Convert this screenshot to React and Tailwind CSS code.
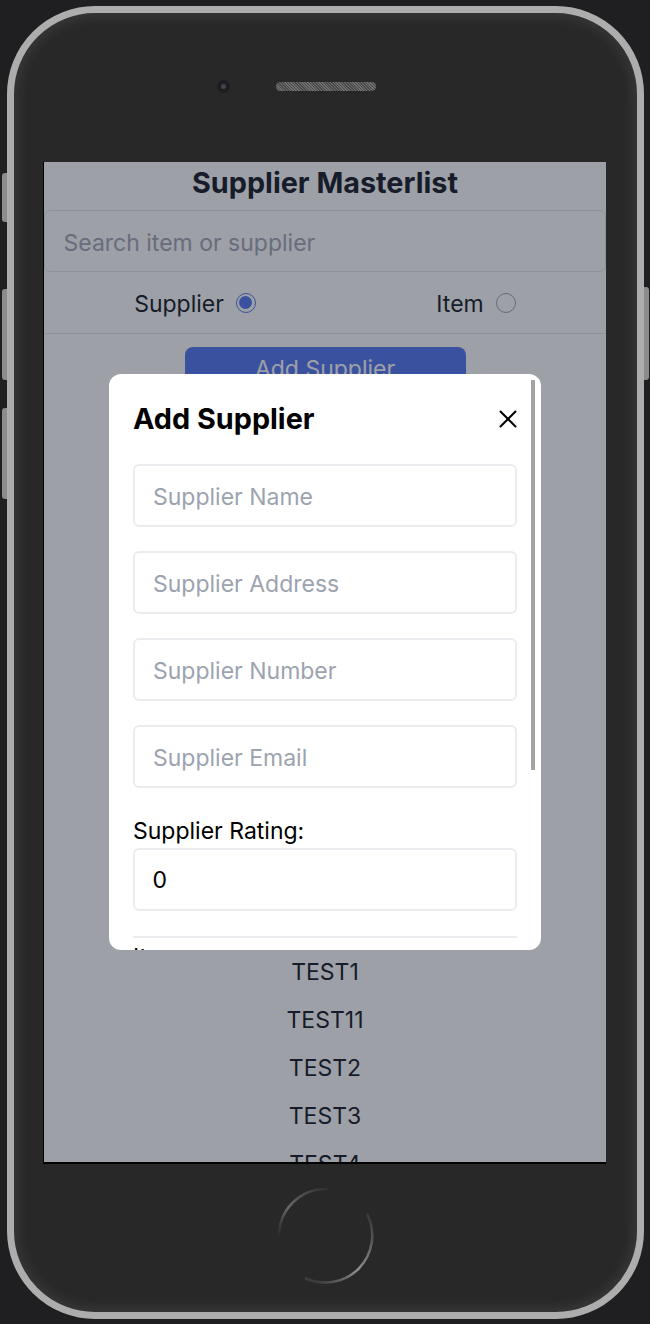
import { X } from "lucide-react";

const fields = ["Supplier Name", "Supplier Address", "Supplier Number", "Supplier Email"];
const items = ["TEST1", "TEST11", "TEST2", "TEST3", "TEST4"];

function Radio({ label, checked }) {
  return (
    <label className="flex-1 flex items-center justify-center pl-[21px] gap-3">
      <span className="pt-[4px]">{label}</span>
      <span
        className={`w-5 h-5 rounded-full border-[1.5px] flex items-center justify-center ${
          checked ? "border-[#587af4]" : "border-[#a4a6ac]"
        }`}
      >
        {checked && <span className="w-[13px] h-[13px] rounded-full bg-[#587af4]" />}
      </span>
    </label>
  );
}

function SideButton({ className }) {
  return <div className={`absolute w-[5px] bg-[#8c8c8c] ${className}`} />;
}

export default function App() {
  return (
    <div className="relative w-[650px] h-[1324px] bg-[#1f1f21] pt-[6px] pl-[7px] overflow-hidden font-['Inter',sans-serif]">
      <SideButton className="left-[2px] top-[173px] h-[49px] rounded-l-[3px]" />
      <SideButton className="left-[2px] top-[289px] h-[91px] rounded-l-[3px]" />
      <SideButton className="left-[2px] top-[408px] h-[91px] rounded-l-[3px]" />
      <SideButton className="left-[644px] top-[287px] h-[93px] rounded-r-[3px]" />

      <div className="w-[637px] h-[1313px] rounded-[88px] border-[7px] border-[#adadad] bg-[#282828] shadow-[inset_0_0_14px_3px_rgba(255,255,255,0.09)] flex flex-col pl-[29px] pr-[31px]">
        {/* top of the phone */}
        <div className="h-[149px] shrink-0">
          <div className="flex items-center pt-[67px] pl-[174px]">
            <div className="w-[13px] h-[13px] rounded-full bg-[#1d1d22] flex items-center justify-center">
              <div className="w-[5px] h-[5px] rounded-full bg-[#44444c]" />
            </div>
            <div className="ml-[46px] w-[100px] h-[9px] rounded-full bg-[repeating-linear-gradient(45deg,#6e6e6e_0_1px,#4a4a4a_1px_2px)]" />
          </div>
        </div>

        {/* screen */}
        <div className="relative h-[1002px] shrink-0 bg-white border-l border-b-2 border-black overflow-hidden text-[23px] text-[#1a1f2b]">
          <h1 className="h-[48px] pb-[6px] flex items-center justify-center text-[28.8px] font-bold">Supplier Masterlist</h1>
          <input
            className="block w-full h-[62px] px-[18.5px] pt-[3px] border-[1.5px] border-[#e5e7eb] rounded-md outline-none placeholder:text-[#a6a9b6]"
            placeholder="Search item or supplier"
            readOnly
          />
          <div className="h-[62px] flex items-center border-b-[1.5px] border-[#e5e7eb]">
            <Radio label="Supplier" checked />
            <Radio label="Item" />
          </div>
          <div className="flex justify-center pt-[13px]">
            <button className="w-[281px] h-[44px] rounded-lg bg-[#587af4] text-white">Add Supplier</button>
          </div>
          <ul className="mt-[557px] text-center">
            {items.map((name) => (
              <li key={name} className="h-[48px] flex items-center justify-center">
                {name}
              </li>
            ))}
          </ul>

          {/* backdrop and dialog */}
          <div className="absolute inset-0 bg-[#111827]/[0.41] flex items-center justify-center">
            <div className="relative w-[432px] h-[576px] bg-white rounded-xl overflow-hidden px-6 text-black">
              <div className="absolute right-[6px] top-[6px] w-1 h-[390px] bg-[#a3a3a3]" />
              <div className="h-[90px] flex items-center justify-between">
                <h2 className="text-[28.8px] font-bold">Add Supplier</h2>
                <X size={30} strokeWidth={1.6} className="-mr-[6px]" />
              </div>
              <div className="flex flex-col gap-6">
                {fields.map((field) => (
                  <input
                    key={field}
                    className="block w-full h-[63px] px-[18px] pt-[3px] border-2 border-[#ebecf0] rounded-md outline-none placeholder:text-[#9ca3af]"
                    placeholder={field}
                    readOnly
                  />
                ))}
              </div>
              <div className="mt-[23px] h-[37px] pt-[3px] flex items-center">Supplier Rating:</div>
              <input
                className="block w-full h-[63px] px-[17.5px] border-2 border-[#ebecf0] rounded-md outline-none"
                value="0"
                readOnly
              />
              <div className="mt-[25px] border-t-2 border-[#ebecf0] pt-[5px] leading-[28px]">Items</div>
            </div>
          </div>
        </div>

        {/* home button */}
        <div className="flex justify-center pt-[22px] pl-[3px]">
          <svg width="100" height="100" viewBox="0 0 100 100" fill="none">
            <defs>
              <linearGradient id="homeA" x1="0" y1="1" x2="1" y2="0">
                <stop offset="0" stopColor="#5d5d5d" stopOpacity="0" />
                <stop offset="0.4" stopColor="#6a6a6a" />
                <stop offset="1" stopColor="#6a6a6a" stopOpacity="0.1" />
              </linearGradient>
              <linearGradient id="homeB" x1="0.9" y1="0" x2="0.2" y2="1">
                <stop offset="0" stopColor="#8a8a8a" stopOpacity="0.2" />
                <stop offset="0.6" stopColor="#8f8f8f" />
                <stop offset="1" stopColor="#8f8f8f" stopOpacity="0.2" />
              </linearGradient>
            </defs>
            <path d="M3 52 A47 47 0 0 1 52 3" stroke="url(#homeA)" strokeWidth="2.5" />
            <path d="M91 28 A47 47 0 0 1 29 92" stroke="url(#homeB)" strokeWidth="2.5" />
          </svg>
        </div>
      </div>
    </div>
  );
}
